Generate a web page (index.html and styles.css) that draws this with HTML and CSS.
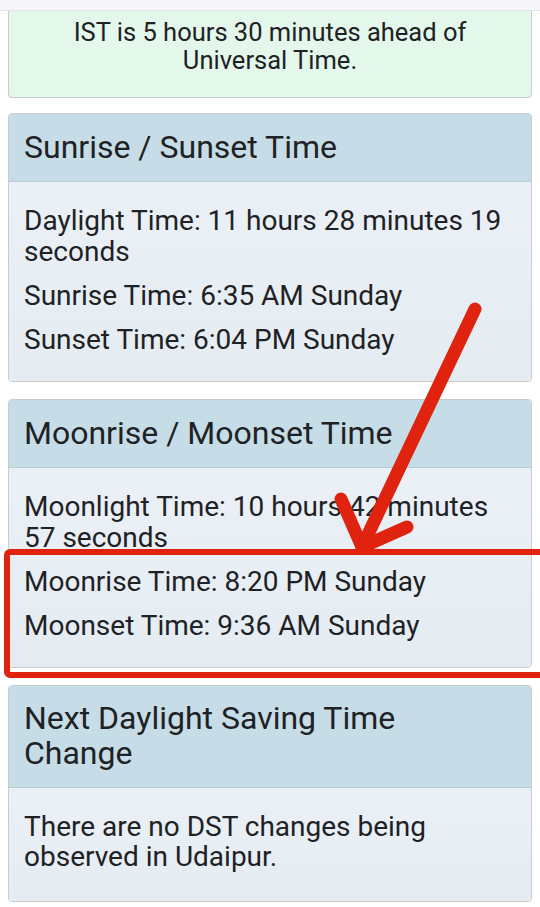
FILE: index.html
```html
<!DOCTYPE html>
<html>
<head>
<meta charset="utf-8">
<link rel="stylesheet" href="styles.css">
</head>
<body>
<div class="topbar"></div>
<main class="page">
  <section class="notice">
    <p>IST is 5 hours 30 minutes ahead of Universal Time.</p>
  </section>
  <section class="card">
    <h2 class="card-head">Sunrise / Sunset Time</h2>
    <div class="card-body">
      <p>Daylight Time: 11 hours 28 minutes 19 seconds</p>
      <p>Sunrise Time: 6:35 AM Sunday</p>
      <p>Sunset Time: 6:04 PM Sunday</p>
    </div>
  </section>
  <section class="card">
    <h2 class="card-head">Moonrise / Moonset Time</h2>
    <div class="card-body">
      <p>Moonlight Time: 10 hours 42 minutes 57 seconds</p>
      <p>Moonrise Time: 8:20 PM Sunday</p>
      <p>Moonset Time: 9:36 AM Sunday</p>
    </div>
  </section>
  <section class="card">
    <h2 class="card-head two-line">Next Daylight Saving Time Change</h2>
    <div class="card-body dst">
      <p>There are no DST changes being observed in Udaipur.</p>
    </div>
  </section>
</main>
<svg class="annotation" width="540" height="907" viewBox="0 0 540 907">
  <g fill="none" stroke="#e0230e" stroke-linecap="round" stroke-linejoin="round">
    <rect x="7" y="552" width="540" height="123" rx="3" stroke-width="6"/>
    <path d="M475 309 L362 547" stroke-width="13"/>
    <path d="M341 499 L362 547 L407 527" stroke-width="13"/>
  </g>
</svg>
</body>
</html>
```

FILE: styles.css
```css
html, body {
  margin: 0;
  padding: 0;
  background: #ffffff;
}
body {
  font-family: Roboto, "Noto Sans", Arial, sans-serif;
  color: #1f2225;
  width: 540px;
  height: 907px;
  overflow: hidden;
  position: relative;
}
.topbar {
  height: 10px;
  background: #f7f6fb;
  border-bottom: 1px solid #e2e2e8;
}
.page {
  padding: 0 8px;
  display: flex;
  flex-direction: column;
  gap: 16px;
}
.notice {
  background: #e3f7eb;
  border: 1px solid #c9cccb;
  border-top: none;
  border-radius: 0 0 4px 4px;
  padding: 7px 30px 23px;
  text-align: center;
  margin-bottom: -1px;
}
.notice p {
  margin: 0;
  font-size: 25.5px;
  line-height: 28px;
}
.card {
  border: 1px solid #c8ccd0;
  border-radius: 4px;
  overflow: hidden;
}
.card + .card {
  margin-top: 1px;
}
.card-head {
  margin: 0;
  background: #c6dce6;
  border-bottom: 1px solid #b9ccd6;
  font-weight: 400;
  font-size: 32px;
  line-height: 35px;
  padding: 16px 40px 16px 15px;
}
.card-head.two-line {
  padding-top: 15px;
}
.card-body {
  background: linear-gradient(180deg, #eaf0f6 0%, #e4ecf2 100%);
  padding: 23px 15px 26px;
  display: flex;
  flex-direction: column;
  gap: 13px;
}
.card-body p {
  margin: 0;
  font-size: 28px;
  line-height: 31px;
}
.card-body.dst {
  padding: 24px 15px 29px;
}
.card-body.dst p {
  line-height: 30px;
}
.annotation {
  position: absolute;
  left: 0;
  top: 0;
  pointer-events: none;
}
```
